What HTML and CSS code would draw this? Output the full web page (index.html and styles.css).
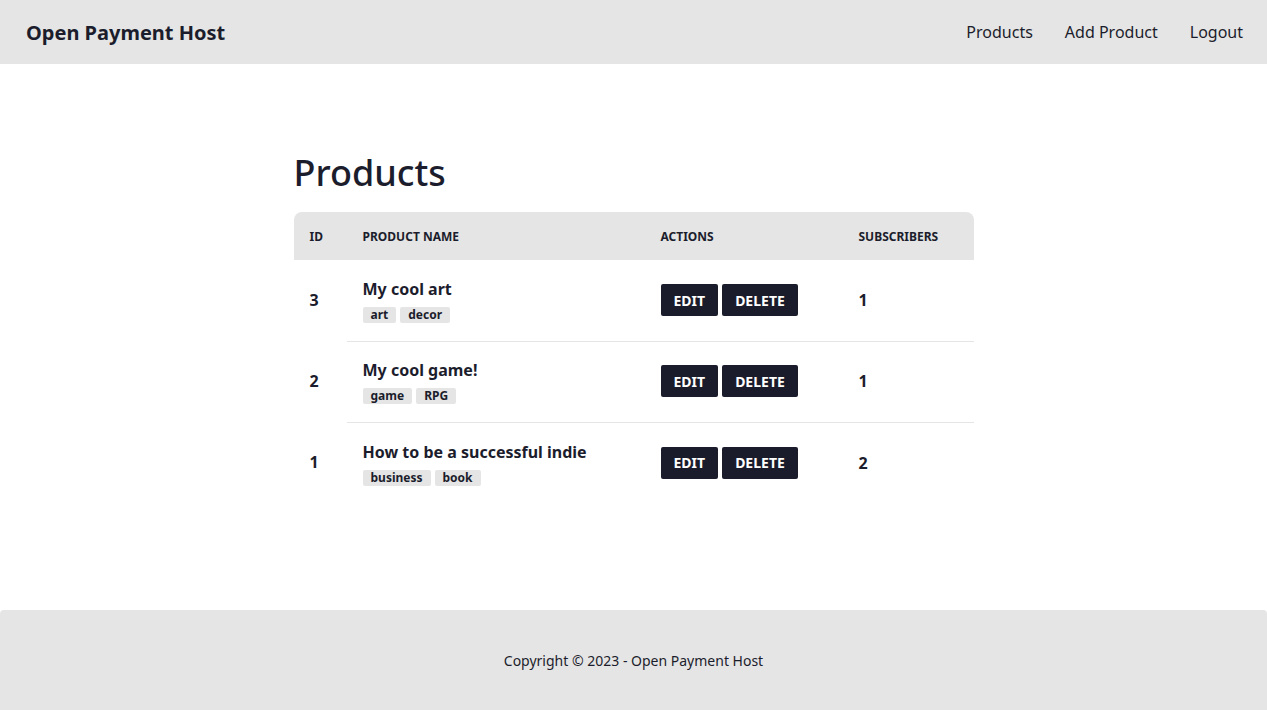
FILE: index.html
```html
<!DOCTYPE html>
<html lang="en">
<head>
<meta charset="utf-8">
<title>Open Payment Host</title>
<link rel="stylesheet" href="styles.css">
</head>
<body>
<header class="navbar">
  <a class="brand" href="#">Open Payment Host</a>
  <nav class="nav-links">
    <a href="#">Products</a>
    <a href="#">Add Product</a>
    <a href="#">Logout</a>
  </nav>
</header>
<main class="main">
  <div class="container">
    <h1 class="title">Products</h1>
    <table class="table">
      <thead>
        <tr>
          <th class="col-id">ID</th>
          <th class="col-name">Product Name</th>
          <th class="col-actions">Actions</th>
          <th class="col-subs">Subscribers</th>
        </tr>
      </thead>
      <tbody>
        <tr>
          <th class="cell-id">3</th>
          <td>
            <div class="name">My cool art</div>
            <div class="tags"><span class="tag">art</span><span class="tag">decor</span></div>
          </td>
          <td><div class="actions"><button class="btn">Edit</button><button class="btn">Delete</button></div></td>
          <td class="subs">1</td>
        </tr>
        <tr>
          <th class="cell-id">2</th>
          <td>
            <div class="name">My cool game!</div>
            <div class="tags"><span class="tag">game</span><span class="tag">RPG</span></div>
          </td>
          <td><div class="actions"><button class="btn">Edit</button><button class="btn">Delete</button></div></td>
          <td class="subs">1</td>
        </tr>
        <tr>
          <th class="cell-id">1</th>
          <td>
            <div class="name">How to be a successful indie</div>
            <div class="tags"><span class="tag">business</span><span class="tag">book</span></div>
          </td>
          <td><div class="actions"><button class="btn">Edit</button><button class="btn">Delete</button></div></td>
          <td class="subs">2</td>
        </tr>
      </tbody>
    </table>
  </div>
</main>
<footer class="footer">
  <p>Copyright © 2023 - Open Payment Host</p>
</footer>
</body>
</html>
```
FILE: styles.css
```css
* { box-sizing: border-box; }
html, body { margin: 0; padding: 0; }
body {
  font-family: "Noto Sans", "Open Sans", sans-serif;
  color: #1c1d2c;
  background: #ffffff;
  min-height: 100vh;
  display: flex;
  flex-direction: column;
}
a { color: inherit; text-decoration: none; }

.navbar {
  height: 64px;
  background: #e5e5e5;
  display: flex;
  align-items: center;
  justify-content: space-between;
  padding: 0 24px 0 26px;
}
.brand { font-size: 20px; font-weight: 700; }
.nav-links { display: flex; gap: 32px; font-size: 16px; }

.main { flex: 1; display: flex; justify-content: center; }
.container { width: 680px; padding-top: 84px; }
.title {
  font-size: 36px;
  font-weight: 500;
  margin: 0 0 14px 0;
  line-height: 1.4;
}

.table { width: 100%; border-collapse: collapse; }
.table thead th {
  background: #e5e5e5;
  font-size: 12px;
  font-weight: 700;
  text-transform: uppercase;
  text-align: left;
  height: 48px;
  padding: 0 16px;
}
.table thead th:first-child { border-top-left-radius: 8px; }
.table thead th:last-child { border-top-right-radius: 8px; }
.col-id { width: 53px; }
.col-name { width: 298px; }
.col-actions { width: 198px; }

.table tbody td, .table tbody th {
  padding: 0 16px 1px;
  height: 81px;
  text-align: left;
  vertical-align: middle;
}
.table tbody tr + tr td { border-top: 1px solid #e5e5e5; }
.cell-id { font-size: 16px; font-weight: 700; }
.name { font-size: 16px; font-weight: 700; line-height: 24px; }
.tags { display: flex; gap: 4px; margin-top: 6px; }
.tag {
  background: #e5e5e5;
  font-size: 12px;
  font-weight: 700;
  line-height: 16px;
  padding: 0 8px;
  border-radius: 2px;
}
.actions { display: flex; gap: 4px; }
.btn {
  font-family: inherit;
  background: #1b1c2b;
  color: #ffffff;
  border: none;
  border-radius: 2px;
  height: 32px;
  padding: 0 13px;
  font-size: 14px;
  font-weight: 700;
  text-transform: uppercase;
}
.subs { font-size: 16px; font-weight: 700; }

.footer {
  height: 100px;
  background: #e5e5e5;
  border-radius: 4px 4px 0 0;
  display: flex;
  align-items: center;
  justify-content: center;
  font-size: 14px;
}
.footer p { margin: 0; }
```
